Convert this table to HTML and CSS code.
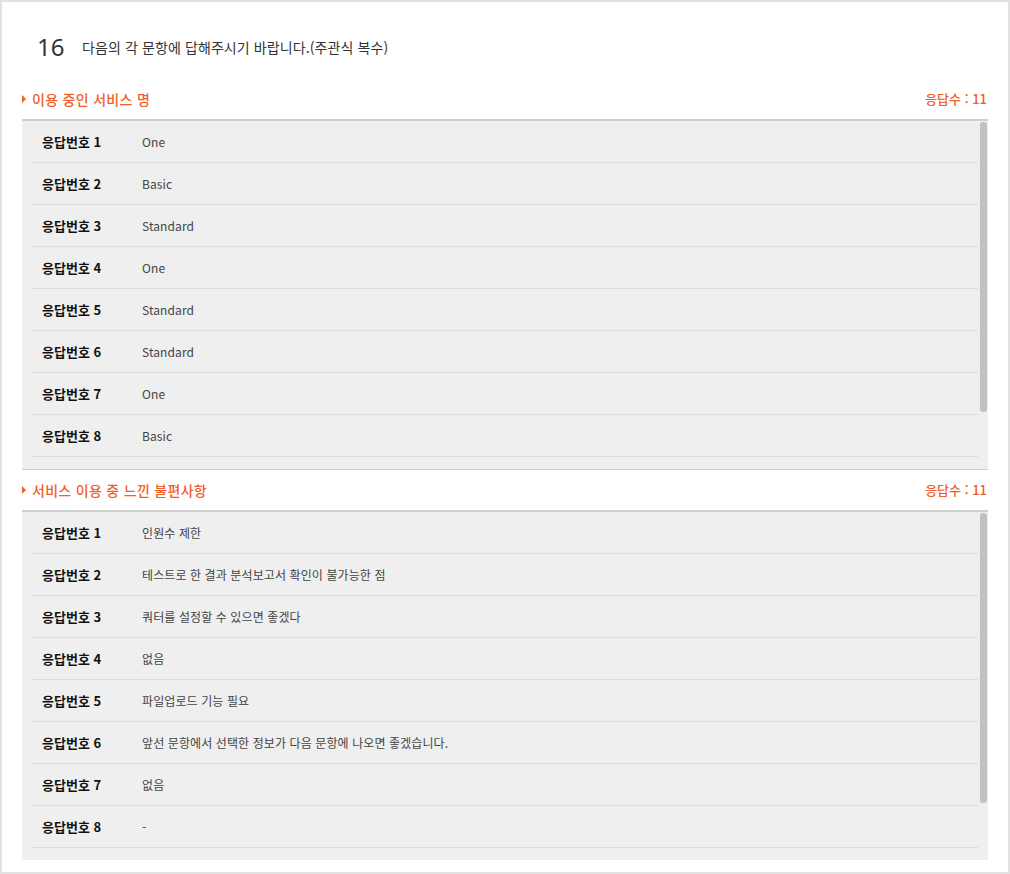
FILE: index.html
```html
<!DOCTYPE html>
<html lang="ko">
<head>
<meta charset="utf-8">
<title>설문 결과</title>
<link rel="stylesheet" href="styles.css">
</head>
<body>
<div class="frame">
  <div class="question">
    <span class="qnum">16</span>
    <span class="qtext">다음의 각 문항에 답해주시기 바랍니다.(주관식 복수)</span>
  </div>

  <section class="section">
    <div class="sec-head">
      <span class="sec-title"><span class="tri"></span>이용 중인 서비스 명</span>
      <span class="sec-count">응답수 : 11</span>
    </div>
    <div class="list-wrap">
      <div class="list">
        <div class="row"><span class="lbl">응답번호 1</span><span class="val">One</span></div>
        <div class="row"><span class="lbl">응답번호 2</span><span class="val">Basic</span></div>
        <div class="row"><span class="lbl">응답번호 3</span><span class="val">Standard</span></div>
        <div class="row"><span class="lbl">응답번호 4</span><span class="val">One</span></div>
        <div class="row"><span class="lbl">응답번호 5</span><span class="val">Standard</span></div>
        <div class="row"><span class="lbl">응답번호 6</span><span class="val">Standard</span></div>
        <div class="row"><span class="lbl">응답번호 7</span><span class="val">One</span></div>
        <div class="row"><span class="lbl">응답번호 8</span><span class="val">Basic</span></div>
      </div>
      <div class="thumb"></div>
    </div>
  </section>

  <section class="section second">
    <div class="sec-head">
      <span class="sec-title"><span class="tri"></span>서비스 이용 중 느낀 불편사항</span>
      <span class="sec-count">응답수 : 11</span>
    </div>
    <div class="list-wrap">
      <div class="list">
        <div class="row"><span class="lbl">응답번호 1</span><span class="val">인원수 제한</span></div>
        <div class="row"><span class="lbl">응답번호 2</span><span class="val">테스트로 한 결과 분석보고서 확인이 불가능한 점</span></div>
        <div class="row"><span class="lbl">응답번호 3</span><span class="val">쿼터를 설정할 수 있으면 좋겠다</span></div>
        <div class="row"><span class="lbl">응답번호 4</span><span class="val">없음</span></div>
        <div class="row"><span class="lbl">응답번호 5</span><span class="val">파일업로드 기능 필요</span></div>
        <div class="row"><span class="lbl">응답번호 6</span><span class="val">앞선 문항에서 선택한 정보가 다음 문항에 나오면 좋겠습니다.</span></div>
        <div class="row"><span class="lbl">응답번호 7</span><span class="val">없음</span></div>
        <div class="row"><span class="lbl">응답번호 8</span><span class="val">-</span></div>
      </div>
      <div class="thumb"></div>
    </div>
  </section>
</div>
</body>
</html>
```

FILE: styles.css
```css
* { box-sizing: border-box; }

html, body {
  margin: 0;
  padding: 0;
  background: #ffffff;
}

body {
  font-family: "Noto Sans CJK KR", "Noto Sans", sans-serif;
  color: #333;
  width: 1010px;
  height: 874px;
  overflow: hidden;
}

.frame {
  width: 1010px;
  height: 874px;
  border: 2px solid #e2e2e2;
  padding: 0 20px 11px 20px;
  display: flex;
  flex-direction: column;
  background: #fff;
}

.question {
  display: flex;
  align-items: center;
  height: 77px;
  padding: 12px 0 0 15px;
}

.qnum {
  font-size: 24px;
  line-height: 28px;
  color: #333;
  width: 45px;
  font-family: "Noto Sans", "Noto Sans CJK KR", sans-serif;
}

.qtext {
  font-size: 14px;
  line-height: 18px;
  color: #333;
  letter-spacing: 0.1px;
}

.section {
  display: flex;
  flex-direction: column;
}

.section.second {
  border-top: 1px solid #cfcfcf;
}

.sec-head {
  height: 40px;
  display: flex;
  align-items: center;
  justify-content: space-between;
  color: #f0602a;
  font-size: 14px;
  line-height: 18px;
  font-weight: 500;
}

.sec-title {
  display: flex;
  align-items: center;
  letter-spacing: 0.3px;
}

.tri {
  width: 0;
  height: 0;
  border-top: 4px solid transparent;
  border-bottom: 4px solid transparent;
  border-left: 4px solid #f0602a;
  margin: 0 6px 0 0;
}

.sec-count {
  font-size: 13px;
  padding-right: 1px;
}

.list-wrap {
  position: relative;
  height: 350px;
  background: #efefef;
  border-top: 2px solid #cfcfcf;
  overflow: hidden;
}

.list {
  padding: 0 10px;
}

.thumb {
  position: absolute;
  top: 1px;
  right: 1px;
  width: 7px;
  height: 290px;
  background: #c1c1c1;
  border-radius: 3px;
}

.row {
  height: 42px;
  display: flex;
  align-items: center;
  border-bottom: 1px solid #dcdcdc;
  padding-left: 10px;
}

.lbl {
  width: 100px;
  font-size: 13px;
  line-height: 18px;
  font-weight: 700;
  color: #111;
}

.val {
  font-size: 12px;
  line-height: 16px;
  color: #444;
  letter-spacing: 0.1px;
}
```
